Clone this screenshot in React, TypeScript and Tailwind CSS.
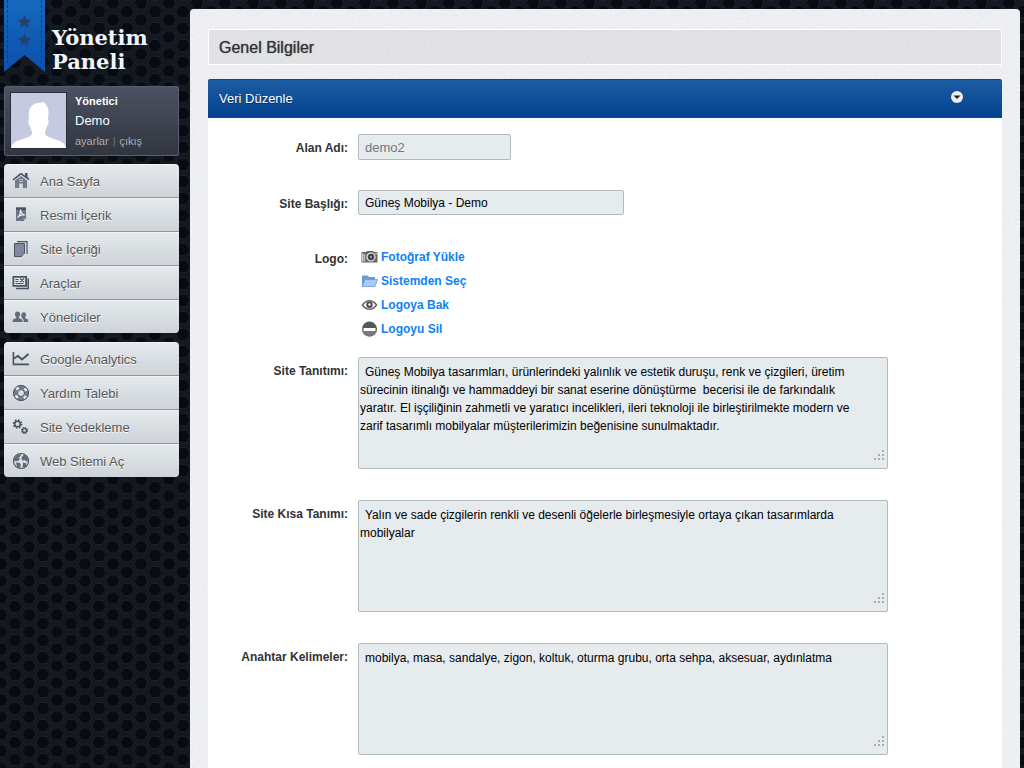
import type { ReactNode } from "react";

const ink = "#4b5262";

function HomeIcon() {
  return (
    <svg width="18" height="18" viewBox="0 0 18 18" fill={ink}>
      <path d="M13 1h2.500v4l2 2-1 1L9 2.800 1.500 8.500.5 7.500 8 1.200h2l3 2.600z" />
      <path fill="#737a88" d="M3 8.500 9 4l6 4.500V16h-4.200v-4.500H7.200V16H3z" />
      <path fill="#e3e6ea" d="M7.500 7h1.200v1.200H7.500zm1.900 0h1.200v1.200H9.400zM7.500 8.900h1.200v1.200H7.500zm1.900 0h1.200v1.200H9.400z" />
    </svg>
  );
}

function PdfIcon() {
  return (
    <svg width="18" height="18" viewBox="0 0 18 18">
      <path fill="#6c7486" d="M4 1.500h10v10L11 15H4z" />
      <path fill={ink} d="M4 1.500h10V4H4z" />
      <path fill="none" stroke="#eef1f5" strokeWidth="1.200" d="M8.500 3.500c.4 3 1.500 5 4.500 5.500-3-.6-5.500 0-7.500 2.500 2-1.500 3.200-4.500 3-8z" />
      <path fill="#e9ecf0" stroke={ink} strokeWidth=".7" d="m11 15 .2-3.200L14 11.500z" />
    </svg>
  );
}

function PagesIcon() {
  return (
    <svg width="18" height="18" viewBox="0 0 18 18">
      <path fill="none" stroke={ink} strokeWidth="1.200" d="M5 1.600h10V14" />
      <path fill="#8089a0" stroke={ink} strokeWidth="1" d="M2.500 3.500h10V13l-3 3.500h-7z" />
      <path fill="#e9ecf0" stroke={ink} strokeWidth=".7" d="m9.500 16.500.3-3.200 2.700-.3z" />
    </svg>
  );
}

function ToolsIcon() {
  return (
    <svg width="18" height="18" viewBox="0 0 18 18">
      <path fill="none" stroke={ink} strokeWidth="1.500" d="M16.200 4.500v10H4" />
      <path fill="#e3e6ea" stroke={ink} strokeWidth="1.800" d="M1.400 2.900h12.700v9H1.400z" />
      <path stroke={ink} strokeWidth="1.200" d="M3.500 5.500h3M3.500 7.500h3M3.500 9.500h8M8 4.500l4 3.500M12 4.500 8 8" />
    </svg>
  );
}

function UsersIcon() {
  return (
    <svg width="18" height="18" viewBox="0 0 18 18" fill="#646c7b">
      <path d="M5.500 3.500c1.900 0 2.700 1.300 2.600 2.800 0 1.300-.6 2.200-1.200 2.800v1l3.200 1.500.5 2.400H.5l.4-2.400 3.300-1.500v-1C3.500 8.500 3 7.600 3 6.300c0-1.500.6-2.800 2.500-2.800z" />
      <path d="M11.700 4.300c1.700 0 2.400 1.200 2.300 2.500 0 1.100-.5 1.900-1 2.400v.9l2.900 1.400.4 2.500h-4.500l-.6-3-1.900-1 .5-.5C9 8.500 8.800 4.300 11.700 4.300z" />
    </svg>
  );
}

function ChartIcon() {
  return (
    <svg width="18" height="18" viewBox="0 0 18 18" fill="none" stroke={ink}>
      <path strokeWidth="1.600" d="M1.400 2v12.400H17" />
      <path strokeWidth="2" d="M2 8.500 6 6l4 3.500L16.500 4" />
    </svg>
  );
}

function HelpIcon() {
  return (
    <svg width="18" height="18" viewBox="0 0 18 18" fill="none">
      <circle cx="9" cy="9" r="5.800" stroke="#747c89" strokeWidth="4" />
      <circle cx="9" cy="9" r="5.800" stroke="#e6e9ed" strokeWidth="2.800" strokeDasharray="3 6.110" strokeDashoffset="6.050" />
      <circle cx="9" cy="9" r="7.600" stroke={ink} strokeWidth="1" />
      <circle cx="9" cy="9" r="3.500" stroke={ink} strokeWidth="1" />
    </svg>
  );
}

function GearsIcon() {
  return (
    <svg width="18" height="18" viewBox="0 0 18 18" fill="none" stroke={ink}>
      <circle cx="5.500" cy="6" r="2.800" strokeWidth="1.600" />
      <circle cx="5.500" cy="6" r="4" strokeWidth="1.600" strokeDasharray="1.570 1.570" />
      <circle cx="12.500" cy="12.500" r="2" strokeWidth="1.300" />
      <circle cx="12.500" cy="12.500" r="3" strokeWidth="1.300" strokeDasharray="1.180 1.180" />
    </svg>
  );
}

function GlobeIcon() {
  return (
    <svg width="18" height="18" viewBox="0 0 18 18">
      <circle cx="9" cy="9" r="7.500" fill="#dde1e6" stroke={ink} strokeWidth="1.200" />
      <path fill="#626a79" d="M2 7 5 3.200l4-1.500-.5 2.500-2 1.600 1.700 1L6 9 2.500 9.200zm7.500-1.500 2.500-3 3 2 1.300 4-1.800 1-2-1.500-2.500.7zM4 10.500l3.500.3L9 13l-1.200 3.200L5 14.700zm7 0 3.500 1-.7 3-3.300 1.500z" />
    </svg>
  );
}

function CameraIcon() {
  return (
    <svg width="17" height="16" viewBox="0 0 17 16">
      <path fill="#666" d="M.5 3H5l1-1h6l1 1h3.500v10.500H.5z" />
      <path fill="#d5d5d5" d="M1 4.500h1.500v8H1zM3.200 5h1v7.500h-1z" />
      <circle cx="10" cy="8" r="4" fill="#555" stroke="#eee" strokeWidth="1.200" />
      <circle cx="10" cy="8" r="2" fill="#999" stroke="#222" />
      <path fill="#fff" d="M14.500 4h1.200v1.200h-1.200z" />
    </svg>
  );
}

function FolderIcon() {
  return (
    <svg width="17" height="16" viewBox="0 0 17 16">
      <path fill="#6b9bd8" d="M1 2.500h5.500L8 4h6v3H4l-2.500 6H1z" />
      <path fill="#a9cbf5" stroke="#6795d0" strokeWidth=".8" d="M3.800 6.500h12.700L14 13.500H1.200z" />
    </svg>
  );
}

function EyeIcon() {
  return (
    <svg width="17" height="16" viewBox="0 0 17 16">
      <path fill="#fff" stroke="#68656a" strokeWidth="1.600" d="M1.500 8c4-5.600 10-5.600 14 0-4 5.600-10 5.600-14 0z" />
      <circle cx="8.500" cy="7.800" r="3.200" fill="#4c484e" />
      <circle cx="8.500" cy="7.500" r="1.200" fill="#fff" />
    </svg>
  );
}

function RemoveIcon() {
  return (
    <svg width="17" height="16" viewBox="0 0 17 16">
      <circle cx="8.500" cy="8" r="7.500" fill="#57585c" />
      <path fill="#77787b" d="M1.300 10h14.400a7.500 7.500 0 0 1-14.400 0z" />
      <path fill="#fff" d="M2.500 7h12v3h-12z" />
    </svg>
  );
}

function HoneycombBackground() {
  return (
    <svg className="absolute inset-0 -z-10 h-full w-full" aria-hidden="true">
      <defs>
        <pattern id="honeycomb" width="28" height="17" patternUnits="userSpaceOnUse" patternTransform="translate(1 3)">
          <rect width="28" height="17" fill="#141821" />
          <g fill="#080b12" stroke="#191e27" strokeWidth="1">
            <path d="M7 8.500 10.500 2.500h7L21 8.500l-3.500 6h-7z" />
            <path d="M-7 0-3.500-6h7L7 0 3.500 6h-7zM-7 17l3.500-6h7L7 17l-3.500 6h-7z" />
            <path d="M21 0l3.500-6h7L35 0l-3.500 6h-7zM21 17l3.500-6h7l3.500 6-3.500 6h-7z" />
          </g>
        </pattern>
      </defs>
      <rect width="100%" height="100%" fill="url(#honeycomb)" />
    </svg>
  );
}

function PaperTexture() {
  return (
    <svg className="absolute inset-0 -z-10 h-full w-full opacity-10" aria-hidden="true">
      <filter id="paper">
        <feTurbulence type="fractalNoise" baseFrequency="0.35" numOctaves="2" />
        <feColorMatrix type="saturate" values="0" />
      </filter>
      <rect width="100%" height="100%" filter="url(#paper)" />
    </svg>
  );
}

function Ribbon() {
  return (
    <svg width="41" height="72" viewBox="0 0 41 72" aria-hidden="true">
      <defs>
        <linearGradient id="ribbon" x1="0" y1="0" x2="0" y2="1">
          <stop offset="0" stopColor="#1668bd" />
          <stop offset="1" stopColor="#0c50ad" />
        </linearGradient>
      </defs>
      <path fill="url(#ribbon)" d="M0 0h41v72L20.500 55 0 72z" />
      <path fill="none" stroke="#0b3d86" strokeDasharray="3 2" d="M3.500 0v65M37.500 0v65" />
      <g fill="#24406f">
        <path id="star" d="m20.500 15 1.900 4.600 5 .4-3.800 3.200 1.200 4.800-4.300-2.600-4.300 2.600 1.200-4.800-3.800-3.200 5-.4z" />
        <use href="#star" y="18" />
      </g>
    </svg>
  );
}

function Avatar() {
  return (
    <svg className="border border-[#2a2e36]" width="57" height="57" viewBox="0 0 55 55" role="img" aria-label="Yönetici">
      <rect width="55" height="55" fill="#c5cae0" />
      <path
        fill="#fff"
        d="M0 55c1-5 5-7 12-9 5-2 9-3 9-6 0-2-1-3-1.500-6C17 31 17 28 18 26c-1-9 1-15 9-16 3 0 4-1 6-1l2 3c3 3 3 8 2 14 1 2 1 5-1.500 8-.5 3-1.500 4-1.500 6 0 3 4 4 9 6 7 2 11 4 12 9z"
      />
    </svg>
  );
}

type MenuItem = { label: string; icon: ReactNode };

const contentMenu: MenuItem[] = [
  { label: "Ana Sayfa", icon: <HomeIcon /> },
  { label: "Resmi İçerik", icon: <PdfIcon /> },
  { label: "Site İçeriği", icon: <PagesIcon /> },
  { label: "Araçlar", icon: <ToolsIcon /> },
  { label: "Yöneticiler", icon: <UsersIcon /> },
];

const serviceMenu: MenuItem[] = [
  { label: "Google Analytics", icon: <ChartIcon /> },
  { label: "Yardım Talebi", icon: <HelpIcon /> },
  { label: "Site Yedekleme", icon: <GearsIcon /> },
  { label: "Web Sitemi Aç", icon: <GlobeIcon /> },
];

const logoActions: MenuItem[] = [
  { label: "Fotoğraf Yükle", icon: <CameraIcon /> },
  { label: "Sistemden Seç", icon: <FolderIcon /> },
  { label: "Logoya Bak", icon: <EyeIcon /> },
  { label: "Logoyu Sil", icon: <RemoveIcon /> },
];

function Menu({ items }: { items: MenuItem[] }) {
  return (
    <ul className="overflow-hidden rounded">
      {items.map((item) => (
        <li key={item.label} className="border-b border-[#8f959b] last:border-b-0">
          <a
            href="#"
            className="flex h-[33px] items-center gap-[10px] border-t border-[#f1f4f6] bg-linear-to-b from-[#e4e9ec] to-[#ced3d9] pl-2 text-[13px] text-[#555] [text-shadow:0_1px_0_#fff]"
          >
            {item.icon}
            <span className="pt-0.5">{item.label}</span>
          </a>
        </li>
      ))}
    </ul>
  );
}

function Row({ label, id, children }: { label: string; id?: string; children: ReactNode }) {
  const labelClass = "w-[140px] shrink-0 pt-1 text-right font-bold leading-5 text-[#333]";
  return (
    <div className="flex items-start gap-[10px]">
      {id ? (
        <label htmlFor={id} className={labelClass}>
          {label}
        </label>
      ) : (
        <span className={labelClass}>{label}</span>
      )}
      {children}
    </div>
  );
}

function TextArea({ id, value }: { id: string; value: string }) {
  return (
    <div className="relative w-full max-w-[530px]">
      <textarea
        id={id}
        defaultValue={value}
        className="block h-28 w-full resize-none rounded-xs border border-[#b0b9bd] bg-[#e6ebee] pt-[5px] pr-4 pl-px indent-[5px] leading-[18px] text-black outline-none"
      />
      <svg className="absolute right-[3px] bottom-2" width="11" height="11" viewBox="0 0 11 11" fill="#a9adb0" aria-hidden="true">
        <path d="M8 0h2v2H8zM4 4h2v2H4zM8 4h2v2H8zM0 8h2v2H0zM4 8h2v2H4zM8 8h2v2H8z" />
      </svg>
    </div>
  );
}

export default function App() {
  return (
    <div className="relative isolate flex min-h-screen bg-[#0c0f17] pr-1 font-['Liberation_Sans',Arial,sans-serif] text-xs">
      <HoneycombBackground />

      {/* Sidebar */}
      <aside className="w-[190px] shrink-0 pr-[11px] pl-1">
        <div className="flex h-[86px] items-start gap-[7px]">
          <Ribbon />
          <h1 className="pt-[26px] font-['DejaVu_Serif',serif] text-[21px] leading-6 font-bold text-[#f2f6fa]">
            Yönetim
            <br />
            Paneli
          </h1>
        </div>

        <div className="flex h-[70px] gap-2 rounded-xs border border-[#586070] bg-linear-to-b from-[#4b5261] to-[#31363f] p-[5px]">
          <Avatar />
          <div className="self-center text-white">
            <p className="text-[11px] leading-5 font-bold">Yönetici</p>
            <p className="text-[13px] leading-5">Demo</p>
            <p className="text-[11px] leading-5 text-[#a9aeb8]">
              <a href="#">ayarlar</a>
              <span className="mx-1 text-[#6c7381]">|</span>
              <a href="#">çıkış</a>
            </p>
          </div>
        </div>

        <nav className="flex flex-col gap-[9px] pt-2">
          <Menu items={contentMenu} />
          <Menu items={serviceMenu} />
        </nav>
      </aside>

      {/* Content */}
      <main className="relative isolate mt-[9px] flex min-w-0 flex-1 flex-col overflow-hidden rounded-t bg-[#f1f2f5] px-[18px] pt-5">
        <PaperTexture />
        <h2 className="h-9 border border-white bg-black/5 pl-[10px] text-base leading-[36px] text-[#333] [text-shadow:0_0_1px_#555]">
          Genel Bilgiler
        </h2>

        <section className="mt-[14px] flex flex-1 flex-col bg-white">
          <header className="flex h-[39px] items-center justify-between rounded-t-xs border-y border-[#0a468c] bg-linear-to-b from-[#1c5ca2] to-[#054390] pr-[38px] pl-[11px]">
            <h3 className="text-[13px] text-white [text-shadow:0_1px_1px_#032a5c]">Veri Düzenle</h3>
            <button type="button" aria-label="Daralt" className="pb-1">
              <svg width="14" height="14" viewBox="0 0 14 14">
                <circle cx="7" cy="7" r="6" fill="#eee" />
                <path fill="#222" d="M3.500 5.500h7L7 9z" />
              </svg>
            </button>
          </header>

          <form className="flex flex-col gap-[31px] pt-4 pr-4 pb-[13px]">
            <div className="flex flex-col gap-[30px]">
              <Row label="Alan Adı:" id="domain">
                <input
                  id="domain"
                  disabled
                  defaultValue="demo2"
                  className="h-[26px] w-[153px] rounded-xs border border-[#b0b9bd] bg-[#e6ebee] px-[6px] text-[13px] text-[#777]"
                />
              </Row>
              <Row label="Site Başlığı:" id="title">
                <input
                  id="title"
                  defaultValue="Güneş Mobilya - Demo"
                  className="h-[25px] w-[266px] rounded-xs border border-[#b0b9bd] bg-[#e6ebee] px-[6px] text-black outline-none"
                />
              </Row>
              <div className="-mb-[15px]">
                <Row label="Logo:">
                  <ul className="pl-[3px]">
                    {logoActions.map((action) => (
                      <li key={action.label}>
                        <a href="#" className="flex h-6 items-center gap-[3px] font-bold text-[#0f82f5]">
                          {action.icon}
                          {action.label}
                        </a>
                      </li>
                    ))}
                  </ul>
                </Row>
              </div>
            </div>
            <Row label="Site Tanıtımı:" id="intro">
              <TextArea
                id="intro"
                value="Güneş Mobilya tasarımları, ürünlerindeki yalınlık ve estetik duruşu, renk ve çizgileri, üretim sürecinin itinalığı ve hammaddeyi bir sanat eserine dönüştürme  becerisi ile de farkındalık yaratır. El işçiliğinin zahmetli ve yaratıcı incelikleri, ileri teknoloji ile birleştirilmekte modern ve zarif tasarımlı mobilyalar müşterilerimizin beğenisine sunulmaktadır."
              />
            </Row>
            <Row label="Site Kısa Tanımı:" id="summary">
              <TextArea
                id="summary"
                value="Yalın ve sade çizgilerin renkli ve desenli öğelerle birleşmesiyle ortaya çıkan tasarımlarda mobilyalar"
              />
            </Row>
            <Row label="Anahtar Kelimeler:" id="keywords">
              <TextArea
                id="keywords"
                value="mobilya, masa, sandalye, zigon, koltuk, oturma grubu, orta sehpa, aksesuar, aydınlatma"
              />
            </Row>
          </form>
        </section>
      </main>
    </div>
  );
}
